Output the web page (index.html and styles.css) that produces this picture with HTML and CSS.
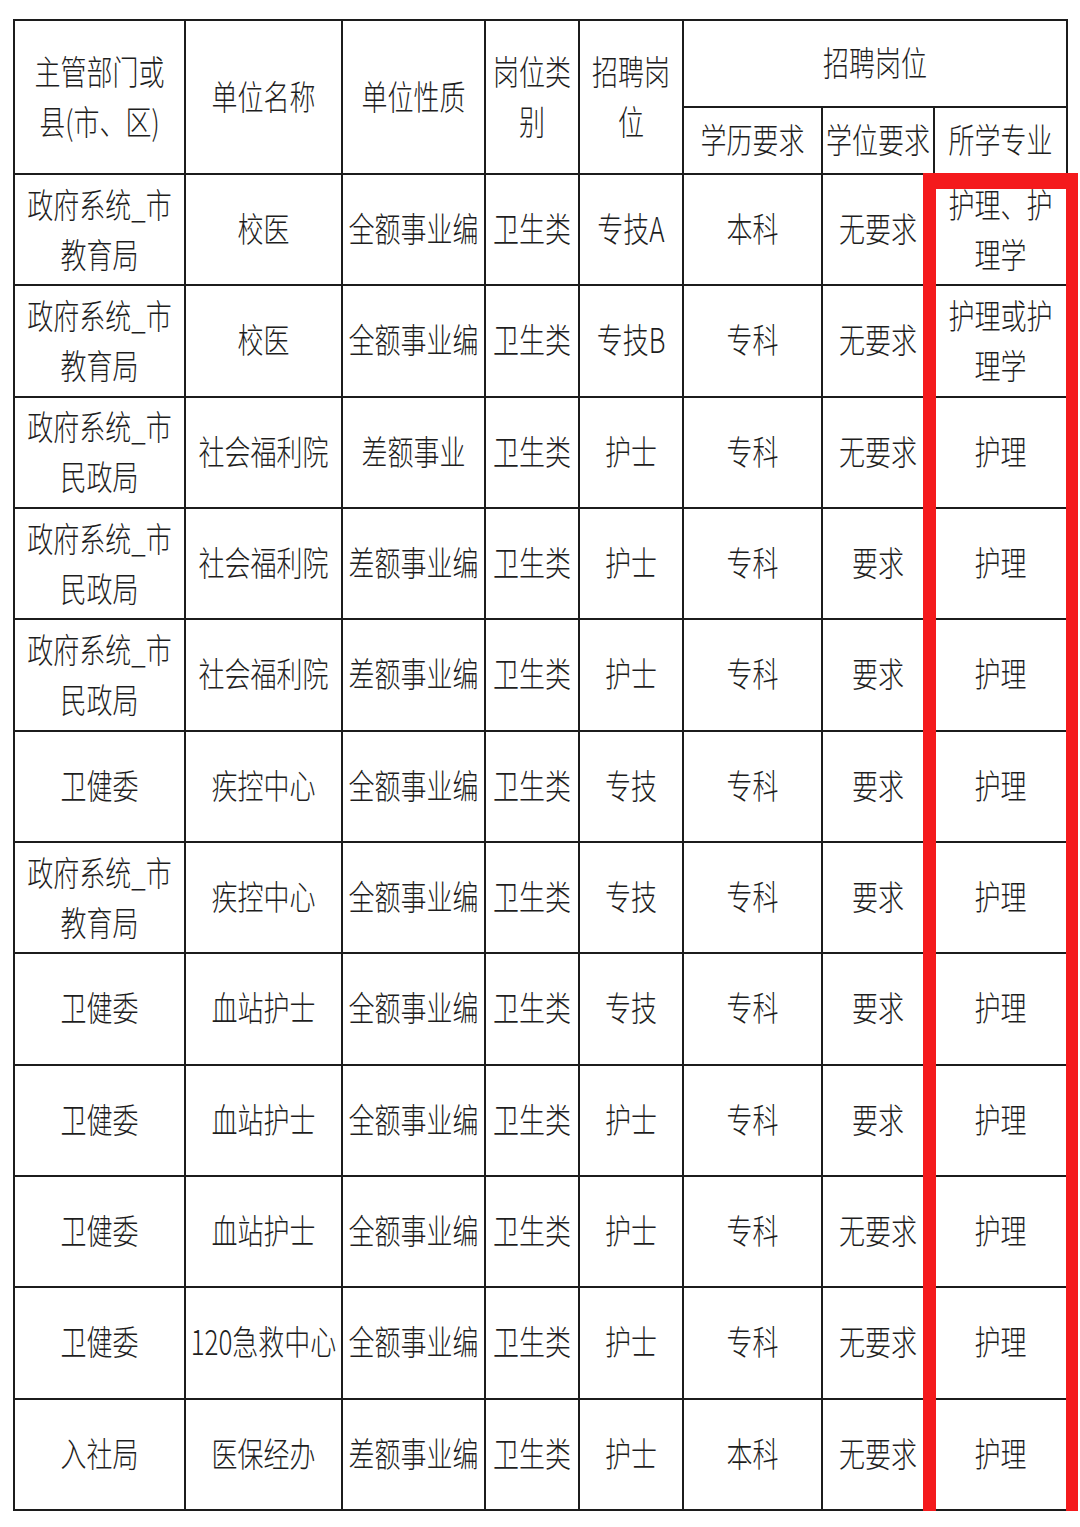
FILE: index.html
```html
<!DOCTYPE html>
<html lang="zh-CN">
<head>
<meta charset="utf-8">
<link rel="stylesheet" href="styles.css">
<title>招聘岗位表</title>
</head>
<body>
<div class="page">
  <div class="sheet">
    <div class="c h r2"><span class="t">主管部门或<br>县(市、区)</span></div>
    <div class="c h r2"><span class="t">单位名称</span></div>
    <div class="c h r2"><span class="t">单位性质</span></div>
    <div class="c h r2"><span class="t">岗位类<br>别</span></div>
    <div class="c h r2"><span class="t">招聘岗<br>位</span></div>
    <div class="c h s3"><span class="t">招聘岗位</span></div>
    <div class="c h"><span class="t">学历要求</span></div>
    <div class="c h"><span class="t">学位要求</span></div>
    <div class="c h"><span class="t">所学专业</span></div>

    <div class="c"><span class="t">政府系统_市<br>教育局</span></div>
    <div class="c"><span class="t">校医</span></div>
    <div class="c"><span class="t">全额事业编</span></div>
    <div class="c"><span class="t">卫生类</span></div>
    <div class="c"><span class="t">专技A</span></div>
    <div class="c"><span class="t">本科</span></div>
    <div class="c"><span class="t">无要求</span></div>
    <div class="c"><span class="t">护理、护<br>理学</span></div>

    <div class="c"><span class="t">政府系统_市<br>教育局</span></div>
    <div class="c"><span class="t">校医</span></div>
    <div class="c"><span class="t">全额事业编</span></div>
    <div class="c"><span class="t">卫生类</span></div>
    <div class="c"><span class="t">专技B</span></div>
    <div class="c"><span class="t">专科</span></div>
    <div class="c"><span class="t">无要求</span></div>
    <div class="c"><span class="t">护理或护<br>理学</span></div>

    <div class="c"><span class="t">政府系统_市<br>民政局</span></div>
    <div class="c"><span class="t">社会福利院</span></div>
    <div class="c"><span class="t">差额事业</span></div>
    <div class="c"><span class="t">卫生类</span></div>
    <div class="c"><span class="t">护士</span></div>
    <div class="c"><span class="t">专科</span></div>
    <div class="c"><span class="t">无要求</span></div>
    <div class="c"><span class="t">护理</span></div>

    <div class="c"><span class="t">政府系统_市<br>民政局</span></div>
    <div class="c"><span class="t">社会福利院</span></div>
    <div class="c"><span class="t">差额事业编</span></div>
    <div class="c"><span class="t">卫生类</span></div>
    <div class="c"><span class="t">护士</span></div>
    <div class="c"><span class="t">专科</span></div>
    <div class="c"><span class="t">要求</span></div>
    <div class="c"><span class="t">护理</span></div>

    <div class="c"><span class="t">政府系统_市<br>民政局</span></div>
    <div class="c"><span class="t">社会福利院</span></div>
    <div class="c"><span class="t">差额事业编</span></div>
    <div class="c"><span class="t">卫生类</span></div>
    <div class="c"><span class="t">护士</span></div>
    <div class="c"><span class="t">专科</span></div>
    <div class="c"><span class="t">要求</span></div>
    <div class="c"><span class="t">护理</span></div>

    <div class="c"><span class="t">卫健委</span></div>
    <div class="c"><span class="t">疾控中心</span></div>
    <div class="c"><span class="t">全额事业编</span></div>
    <div class="c"><span class="t">卫生类</span></div>
    <div class="c"><span class="t">专技</span></div>
    <div class="c"><span class="t">专科</span></div>
    <div class="c"><span class="t">要求</span></div>
    <div class="c"><span class="t">护理</span></div>

    <div class="c"><span class="t">政府系统_市<br>教育局</span></div>
    <div class="c"><span class="t">疾控中心</span></div>
    <div class="c"><span class="t">全额事业编</span></div>
    <div class="c"><span class="t">卫生类</span></div>
    <div class="c"><span class="t">专技</span></div>
    <div class="c"><span class="t">专科</span></div>
    <div class="c"><span class="t">要求</span></div>
    <div class="c"><span class="t">护理</span></div>

    <div class="c"><span class="t">卫健委</span></div>
    <div class="c"><span class="t">血站护士</span></div>
    <div class="c"><span class="t">全额事业编</span></div>
    <div class="c"><span class="t">卫生类</span></div>
    <div class="c"><span class="t">专技</span></div>
    <div class="c"><span class="t">专科</span></div>
    <div class="c"><span class="t">要求</span></div>
    <div class="c"><span class="t">护理</span></div>

    <div class="c"><span class="t">卫健委</span></div>
    <div class="c"><span class="t">血站护士</span></div>
    <div class="c"><span class="t">全额事业编</span></div>
    <div class="c"><span class="t">卫生类</span></div>
    <div class="c"><span class="t">护士</span></div>
    <div class="c"><span class="t">专科</span></div>
    <div class="c"><span class="t">要求</span></div>
    <div class="c"><span class="t">护理</span></div>

    <div class="c"><span class="t">卫健委</span></div>
    <div class="c"><span class="t">血站护士</span></div>
    <div class="c"><span class="t">全额事业编</span></div>
    <div class="c"><span class="t">卫生类</span></div>
    <div class="c"><span class="t">护士</span></div>
    <div class="c"><span class="t">专科</span></div>
    <div class="c"><span class="t">无要求</span></div>
    <div class="c"><span class="t">护理</span></div>

    <div class="c"><span class="t">卫健委</span></div>
    <div class="c"><span class="t">120急救中心</span></div>
    <div class="c"><span class="t">全额事业编</span></div>
    <div class="c"><span class="t">卫生类</span></div>
    <div class="c"><span class="t">护士</span></div>
    <div class="c"><span class="t">专科</span></div>
    <div class="c"><span class="t">无要求</span></div>
    <div class="c"><span class="t">护理</span></div>

    <div class="c"><span class="t">入社局</span></div>
    <div class="c"><span class="t">医保经办</span></div>
    <div class="c"><span class="t">差额事业编</span></div>
    <div class="c"><span class="t">卫生类</span></div>
    <div class="c"><span class="t">护士</span></div>
    <div class="c"><span class="t">本科</span></div>
    <div class="c"><span class="t">无要求</span></div>
    <div class="c"><span class="t">护理</span></div>

    <div class="highlight"></div>
  </div>
</div>
</body>
</html>
```
FILE: styles.css
```css
html, body {
  margin: 0;
  padding: 0;
  background: #ffffff;
}

.page {
  padding: 19px 0 0 13px;
}

.sheet {
  position: relative;
  display: grid;
  grid-template-columns: 171px 157px 143px 94px 104px 139px 112px 133px;
  grid-template-rows: 87px 67px repeat(12, 111.33px);
  width: max-content;
  border-top: 2px solid #1c1c1c;
  border-left: 2px solid #1c1c1c;
  font-family: "Noto Sans CJK SC", "Noto Sans", sans-serif;
  font-weight: 300;
  font-size: 26px;
  color: #1e1e1e;
}

.c {
  box-sizing: border-box;
  border-right: 2px solid #1c1c1c;
  border-bottom: 2px solid #1c1c1c;
  display: flex;
  align-items: center;
  justify-content: center;
  text-align: center;
  overflow: visible;
  white-space: nowrap;
}

.r2 {
  grid-row: span 2;
}

.s3 {
  grid-column: span 3;
}

.t {
  display: inline-block;
  line-height: 39px;
  transform: translateY(-2px) scaleY(1.3);
}

.highlight {
  position: absolute;
  left: 908px;
  top: 152px;
  width: 155px;
  height: 1352px;
  box-sizing: border-box;
  border-style: solid;
  border-color: #f41a1d;
  border-width: 16px 12px 14px 13px;
  pointer-events: none;
}
```
